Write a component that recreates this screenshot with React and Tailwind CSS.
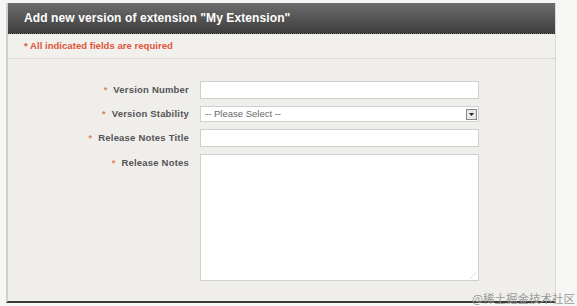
export default function App() {
  const label = "text-[9.5px] font-bold text-[#555] text-right w-[181px] shrink-0 tracking-[0.2px]";
  const Star = () => <span className="text-[#d9825f] mr-[6px] text-[9px]">*</span>;
  return (
    <div className="w-[577px] h-[306px] bg-[#f6f6f4] pt-[3px] pl-[6px] relative overflow-hidden" style={{ fontFamily: "'Liberation Sans', Arial, sans-serif" }}>
      <div className="w-[550px] h-[300px] border-l-2 border-l-[#cfcfcb] border-r border-r-[#d8d8d4] border-b-2 border-b-[#3a3a3a] bg-[#efeeeb] flex flex-col">
        <div className="h-[31px] bg-gradient-to-b from-[#6e6e6e] via-[#555] to-[#3e3e3e] flex items-center pl-[16px] border-b border-dotted border-[#222]">
          <span className="text-white font-bold text-[12px] tracking-[0.1px]">Add new version of extension "My Extension"</span>
        </div>
        <div className="h-[25px] flex items-center pl-[16px] border-b border-dotted border-[#c8c8c4] bg-[#f1f0ed]">
          <span className="text-[#e2553a] font-bold text-[9.6px]">* All indicated fields are required</span>
        </div>
        <div className="flex flex-col pt-[22px] gap-[7px]">
          <div className="flex items-center">
            <div className={label}><Star />Version Number</div>
            <div className="ml-[11px] w-[279px] h-[18px] bg-white border border-[#cfcfcb]" />
          </div>
          <div className="flex items-center">
            <div className={label}><Star />Version Stability</div>
            <div className="ml-[11px] w-[279px] h-[16px] bg-white border border-[#cfcfcb] flex items-center justify-between">
              <span className="text-[9.5px] text-[#666] pl-[4px]">-- Please Select --</span>
              <div className="w-[11px] h-[11px] mr-[1px] border border-[#888] bg-[#e8e8e8] flex items-center justify-center">
                <svg width="5" height="3" viewBox="0 0 5 3"><path d="M0 0h5L2.5 3z" fill="#222" /></svg>
              </div>
            </div>
          </div>
          <div className="flex items-center">
            <div className={label}><Star />Release Notes Title</div>
            <div className="ml-[11px] w-[279px] h-[18px] bg-white border border-[#cfcfcb]" />
          </div>
          <div className="flex items-start">
            <div className={label + " pt-[2px]"}><Star />Release Notes</div>
            <div className="ml-[11px] w-[279px] h-[127px] bg-white border border-[#cfcfcb] relative">
              <div className="absolute right-[2px] bottom-[2px] text-[6px] leading-none text-[#aaa]">⋰</div>
            </div>
          </div>
        </div>
      </div>
      <div className="absolute right-[2px] bottom-[2px] text-[11.5px] leading-none text-[#9a9a9a]" style={{ fontFamily: "'Noto Sans CJK SC', sans-serif" }}>@稀土掘金技术社区</div>
    </div>
  );
}
